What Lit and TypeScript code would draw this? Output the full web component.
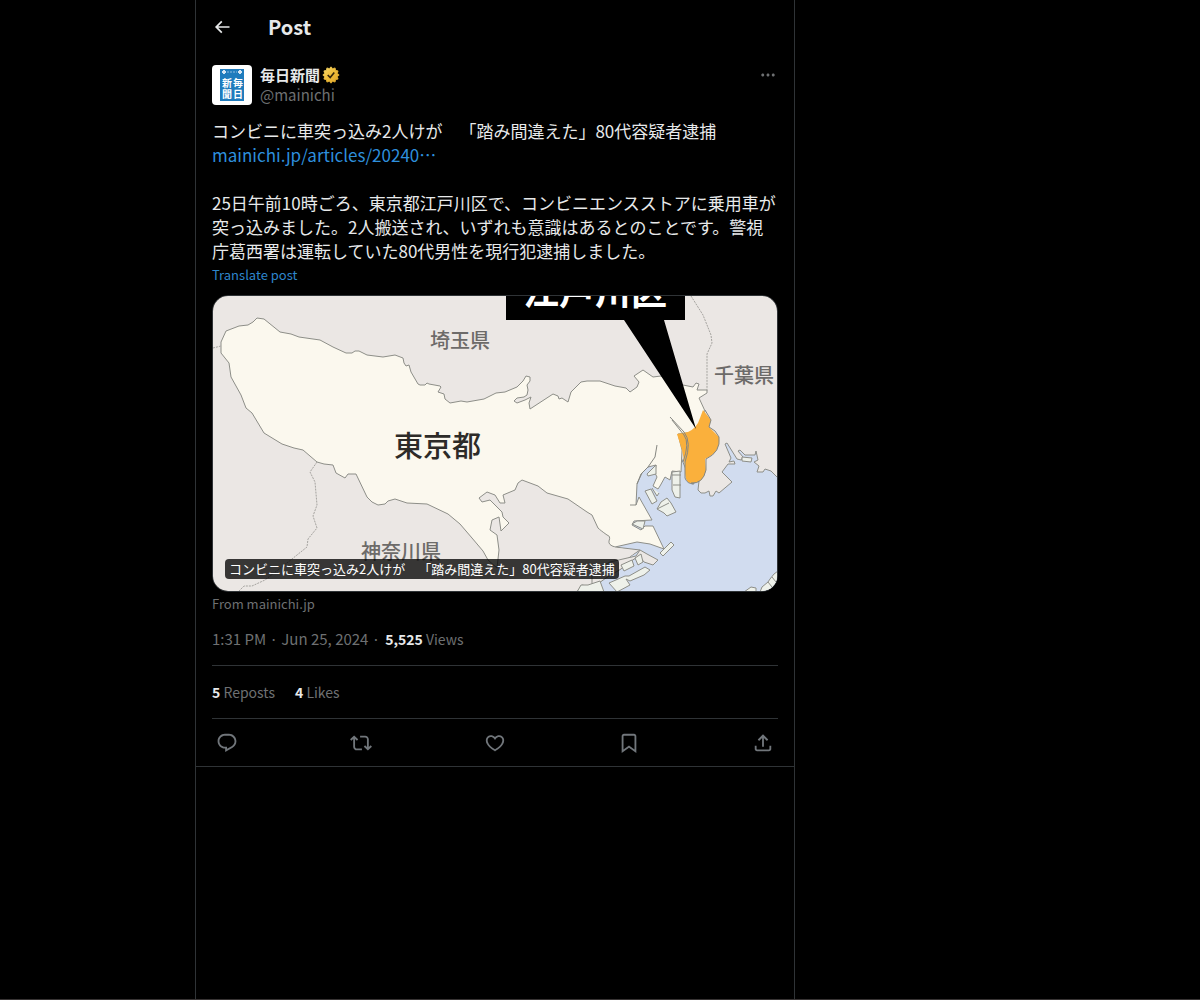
import { LitElement, html, css, svg } from "lit";
import { customElement, property } from "lit/decorators.js";

const ICONS: Record<string, string> = {
  back: "M7.414 13l5.043 5.04-1.414 1.42L3.586 12l7.457-7.46 1.414 1.42L7.414 11H21v2H7.414z",
  more: "M3 12c0-1.1.9-2 2-2s2 .9 2 2-.9 2-2 2-2-.9-2-2zm9 2c1.1 0 2-.9 2-2s-.9-2-2-2-2 .9-2 2 .9 2 2 2zm7 0c1.1 0 2-.9 2-2s-.9-2-2-2-2 .9-2 2 .9 2 2 2z",
  reply:
    "M1.751 10c0-4.42 3.584-8 8.005-8h4.366c4.49 0 8.129 3.64 8.129 8.13 0 2.96-1.607 5.68-4.196 7.11l-8.054 4.46v-3.69h-.067c-4.49.1-8.183-3.51-8.183-8.01zm8.005-6c-3.317 0-6.005 2.69-6.005 6 0 3.37 2.77 6.08 6.138 6.01l.351-.01h1.761v2.3l5.087-2.81c1.951-1.08 3.163-3.13 3.163-5.36 0-3.39-2.744-6.13-6.129-6.13H9.756z",
  repost:
    "M4.5 3.88l4.432 4.14-1.364 1.46L5.5 7.55V16c0 1.1.896 2 2 2H13v2H7.5c-2.209 0-4-1.79-4-4V7.55L1.432 9.48.068 8.02 4.5 3.88zM16.5 6H11V4h5.5c2.209 0 4 1.79 4 4v8.45l2.068-1.93 1.364 1.46-4.432 4.14-4.432-4.14 1.364-1.46 2.068 1.93V8c0-1.1-.896-2-2-2z",
  like: "M16.697 5.5c-1.222-.06-2.679.51-3.89 2.16l-.805 1.09-.806-1.09C9.984 6.01 8.526 5.44 7.304 5.5c-1.243.07-2.349.78-2.91 1.91-.552 1.12-.633 2.78.479 4.82 1.074 1.97 3.257 4.27 7.129 6.61 3.87-2.34 6.052-4.64 7.126-6.61 1.111-2.04 1.03-3.7.477-4.82-.561-1.13-1.666-1.84-2.908-1.91zm4.187 7.69c-1.351 2.48-4.001 5.12-8.379 7.67l-.503.3-.504-.3c-4.379-2.55-7.029-5.19-8.382-7.67-1.36-2.5-1.41-4.86-.514-6.67.887-1.79 2.647-2.91 4.601-3.01 1.651-.09 3.368.56 4.798 2.01 1.429-1.45 3.146-2.1 4.796-2.01 1.954.1 3.714 1.22 4.601 3.01.896 1.81.846 4.17-.514 6.67z",
  bookmark:
    "M4 4.5C4 3.12 5.119 2 6.5 2h11C18.881 2 20 3.12 20 4.5v18.44l-8-5.71-8 5.71V4.5zM6.5 4c-.276 0-.5.22-.5.5v14.56l6-4.29 6 4.29V4.5c0-.28-.224-.5-.5-.5h-11z",
  share:
    "M12 2.59l5.7 5.7-1.41 1.42L13 6.41V16h-2V6.41l-3.3 3.3-1.41-1.42L12 2.59zM21 15l-.02 3.51c0 1.38-1.12 2.49-2.5 2.49H5.5C4.11 21 3 19.88 3 18.5V15h2v3.5c0 .28.22.5.5.5h12.98c.28 0 .5-.22.5-.5L19 15h2z",
};

// Outline of the twelve-pointed verification seal, centred in a 22-unit box.
const SEAL = Array.from({ length: 24 }, (_, i) => {
  const radius = i % 2 ? 8 : 10;
  const angle = (i * Math.PI) / 12;
  return `${(11 + radius * Math.sin(angle)).toFixed(2)},${(11 - radius * Math.cos(angle)).toFixed(2)}`;
}).join(" ");

@customElement("icon-button")
class IconButton extends LitElement {
  @property() icon = "more";
  @property() label = "";

  static styles = css`
    :host {
      display: inline-flex;
    }
    .btn {
      display: inline-flex;
      padding: 0;
      border: 0;
      background: none;
      color: inherit;
      cursor: pointer;
    }
    .glyph {
      width: var(--icon-size, 22px);
      height: var(--icon-size, 22px);
      fill: currentColor;
    }
  `;

  render() {
    return html`<button class="btn" type="button" aria-label=${this.label}>
      <svg class="glyph" viewBox="0 0 24 24" aria-hidden="true"><path d=${ICONS[this.icon]} /></svg>
    </button>`;
  }
}

// Map of Tokyo with Edogawa ward highlighted.
@customElement("ward-map")
class WardMap extends LitElement {
  static styles = css`
    :host {
      display: block;
    }
    .map {
      display: block;
      width: 100%;
      height: auto;
      background: #ebe7e4;
      font-family: "Noto Sans CJK JP", sans-serif;
    }
    .sea {
      fill: #d1dcef;
    }
    .land {
      fill: #fbf8ee;
    }
    .far {
      fill: #ebe7e4;
    }
    .isle {
      fill: #eef1ea;
    }
    .ward {
      fill: #fab03c;
    }
    .coast {
      stroke: #8d8e88;
      stroke-width: 1;
      stroke-linejoin: round;
    }
    .line {
      fill: none;
      stroke: #858680;
      stroke-width: 1;
      stroke-linejoin: round;
    }
    .dotted {
      fill: none;
      stroke: #a5a39f;
      stroke-width: 1;
      stroke-dasharray: 2 1;
    }
    .pref {
      font-size: 20px;
      font-weight: 500;
      fill: #6d6b69;
    }
    .city {
      font-size: 29px;
      font-weight: 500;
      fill: #2d2b28;
    }
    .callout {
      font-size: 36px;
      font-weight: 700;
      fill: #fff;
    }
  `;

  render() {
    return html`<svg class="map" viewBox="213 296 564 295" role="img" aria-label="東京都 江戸川区">
      ${svg`
      <path class="sea coast" d="M680 455L692 484L699 481L698 490L701 493L705 493L709 491L710 496L713 496L716 491L719 493L732 482L722 472L728 464L735 464L734 461L729 462L731 458L725 444L727 443L737 459L741 460L743 457L738 451L740 450L745 455L755 455L756 451L758 460L754 462L759 466L757 472L763 472L765 469L771 471L778 478V592H577L582 585L590 587L600 582L612 572L625 560L640 550L615 547L630 500L636 484L640 474L655 461L657 445L672 460Z"/>
      <path class="land coast" d="M221 342L226 331L239 326L248 325L253 322L257 318L264 319L280 332L291 334L299 337L320 340L333 347L346 353H352L355 351L359 351L367 355L383 357L395 355L403 358L404 363L406 366L409 365L411 372L418 384L420 385L425 385L427 383L429 384L440 386L441 387L438 392L444 394L445 399L450 403L461 401L467 402L484 399L496 393L505 392L517 387L523 381L526 376L530 377V381L527 385L528 390L527 395L524 397L517 398L514 401L517 403L525 400L531 397L529 403L530 409L553 394L558 396L559 399L562 398L568 402L571 392L581 382L587 381L600 381L615 386L626 388L630 392L637 387L639 382L634 376L643 370L653 377L661 376L683 385L693 387L696 383L699 384L697 390L707 390V393L699 398L705 411L696 432L678 434L682 450L681 472L672 471L670 480L665 477L660 486L658 489L653 486L657 477L655 473L656 465L648 467L642 473L637 484L636 505L639 497L652 520L634 521L632 525L641 530L645 526L653 526L664 549L650 544L637 542L615 547Q608 545 609 541Q611 536 607 535Q600 530 598 528L592 515L587 512L568 499L547 493L538 486L522 480L518 483L515 490L503 495L505 503L500 503L495 495L487 492L479 498L482 502L490 500L502 512L503 517L509 523L501 531L499 517L492 520L490 530L497 535L499 550L497 568L488 560L483 551L472 538L460 524L448 514L427 504L407 503L395 499L388 501L385 504L378 505L372 502L367 497L356 474L348 474L345 478L336 473L333 465L324 464L317 462L303 450L294 448L282 444L264 433L252 413L246 408L241 395L231 377L229 363L221 353Z"/>
      <path class="far" d="M611 547L637 551L628 558L600 560Z"/>
      <path class="far coast" d="M592 571L610 562L636 556L640 550L647 554L658 560L653 565L644 562L639 556L628 563L621 569L606 578L592 588Z"/>
      <path class="isle coast" d="M609 583L625 576L629 576L645 567L650 570L644 575L630 581L626 579L630 585L617 592ZM621 565L632 560L634 566L624 571ZM635 558L641 554L643 562L638 565ZM660 553L671 542L674 545L663 556ZM657 509L661 502L667 498L671 503L676 512L667 516L664 513ZM657 509L669 503M645 491L651 489L657 501L652 504ZM652 488L657 496L659 493M672 472L680 471V498L675 497L672 490ZM672 475H681M673 485H681M647 474L656 465L656 474L648 476ZM632 524L637 521H645L643 529ZM630 505H636M742 457L752 458L751 462L742 461Z"/>
      <path class="isle coast" d="M744 592L751 587L756 588L756 592M760 592L762 587L768 582L770 579L774 574L778 571V592M768 582L772 587M772 577L776 582"/>
      <path class="isle coast" d="M577 592L581 585L588 585L600 581L604 592Z"/>
      <path class="ward" d="M703 410L711 420L709 427L719 437Q721 452 705 459L706 470Q703 484 691 483Q684 483 685 465L682 450L677 434L688 432Q697 428 700 418Z"/>
      <path class="line" d="M705 410L711 420L709 427L715 431L719 437Q721 452 706 459V470Q703 484 691 483M670 417L684 432Q692 442 685 462V478Q687 484 694 484M672 420L684 435Q690 443 683 462M657 445L655 457L648 467L641 474L637 484"/>
      <path class="dotted" d="M691 296L703 315L711 335L712 343L707 354V392M213 348L221 346M317 462L310 472L315 482L317 505L313 516L317 528L308 539L307 547L292 559L265 580L252 586H244L238 592"/>
      <path d="M506 296H685V320H664L696 429L624 320H506Z"/>
      <text class="callout" x="523" y="305">江戸川区</text>
      <text class="pref" x="430" y="348">埼玉県</text>
      <text class="pref" x="714" y="383">千葉県</text>
      <text class="pref" x="361" y="559">神奈川県</text>
      <text class="city" x="394" y="457">東京都</text>`}
    </svg>`;
  }
}

@customElement("app-root")
class AppRoot extends LitElement {
  static styles = css`
    :host {
      display: grid;
      grid-template-columns: minmax(0, 195fr) minmax(0, 600px) minmax(0, 405fr);
      box-sizing: border-box;
      min-height: 100vh;
      border-bottom: 1px solid #383434;
      background: #000;
      color: #e7e9ea;
      font-family: "Noto Sans CJK JP", sans-serif;
      font-size: 15px;
      line-height: 20px;
      text-spacing-trim: space-all;
    }
    .column {
      grid-column: 2;
      border: solid #2f3336;
      border-width: 0 1px;
    }
    .bar {
      display: flex;
      align-items: center;
      gap: 36px;
      height: 53px;
      padding: 0 16px;
      --icon-size: 20px;
    }
    .title {
      margin: 0;
      font-size: 20px;
      line-height: 24px;
      font-weight: 700;
    }
    .post {
      padding: 12px 16px 0;
      border-bottom: 1px solid #2f3336;
    }
    .author {
      display: flex;
      gap: 8px;
      --icon-size: 18px;
    }
    .avatar {
      width: 40px;
      height: 40px;
      border-radius: 4px;
      background: #fff;
    }
    .kanji {
      font-size: 10px;
      font-weight: 700;
      fill: #fff;
    }
    .names {
      flex: 1;
      display: flex;
      flex-direction: column;
    }
    .name {
      display: flex;
      align-items: center;
      gap: 2px;
      color: inherit;
      font-weight: 700;
      text-decoration: none;
    }
    .badge {
      width: 18px;
      height: 18px;
    }
    .muted,
    .handle,
    .more {
      color: #6e7072;
      text-decoration: none;
    }
    .more {
      align-self: flex-start;
      padding: 1px;
    }
    .body {
      margin: 14px 0 0;
      font-size: 17px;
      line-height: 24px;
      white-space: pre-wrap;
      overflow-wrap: anywhere;
    }
    .link {
      color: #2e8fdc;
      text-decoration: none;
    }
    .translate {
      display: block;
      padding: 0;
      border: 0;
      background: none;
      color: #2e86cc;
      font: inherit;
      font-size: 13px;
      line-height: 24px;
      cursor: pointer;
    }
    .card {
      position: relative;
      display: block;
      margin-top: 8px;
      overflow: hidden;
      border: 1px solid #2f3336;
      border-radius: 16px;
    }
    .caption {
      position: absolute;
      left: 12px;
      bottom: 12px;
      padding: 0 4px;
      border-radius: 4px;
      background: rgba(0, 0, 0, 0.77);
      color: #fff;
      font-size: 13px;
      line-height: 20px;
    }
    .source {
      display: block;
      font-size: 13px;
      line-height: 24px;
    }
    .meta {
      display: flex;
      align-items: baseline;
      gap: 5px;
      padding: 13px 0 16px;
      border-bottom: 1px solid #2f3336;
    }
    .count {
      font-size: 14px;
    }
    .strong {
      color: #e7e9ea;
      font-weight: 700;
    }
    .stats {
      display: flex;
      gap: 20px;
      padding: 16px 0;
      border-bottom: 1px solid #2f3336;
    }
    .actions {
      display: flex;
      justify-content: space-between;
      align-items: center;
      height: 47px;
      padding: 0 4px;
      color: #71767b;
    }
  `;

  private actions = [
    ["reply", "Reply"],
    ["repost", "Repost"],
    ["like", "Like"],
    ["bookmark", "Bookmark"],
    ["share", "Share"],
  ];

  render() {
    return html`<main class="column">
      <header class="bar">
        <icon-button icon="back" label="Back"></icon-button>
        <h1 class="title">Post</h1>
      </header>
      <article class="post">
        <div class="author">
          <svg class="avatar" viewBox="0 0 40 40" aria-hidden="true">
            <rect x="8" y="4" width="24" height="32" fill="#1f7cbd" />
            <path d="M11 5h2v4h-2zM27 5h2v4h-2zM10 6h4v2h-4zM26 6h4v2h-4z" fill="#d5e6f4" />
            <path d="M15 7h10" stroke="#8fbce0" stroke-dasharray="2 1" />
            <text class="kanji" x="10" y="22">新</text>
            <text class="kanji" x="21" y="22">毎</text>
            <text class="kanji" x="10" y="33">聞</text>
            <text class="kanji" x="21" y="33">日</text>
          </svg>
          <div class="names">
            <a class="name" href="#mainichi"
              >毎日新聞
              <svg class="badge" viewBox="0 0 22 22" aria-hidden="true">
                <defs>
                  <linearGradient id="gold" x1="0" y1="0" x2="1" y2="1">
                    <stop offset="0" stop-color="#f7dc70" />
                    <stop offset=".5" stop-color="#edbb38" />
                    <stop offset="1" stop-color="#e0a52a" />
                  </linearGradient>
                </defs>
                <polygon
                  points=${SEAL}
                  fill="url(#gold)"
                  stroke="url(#gold)"
                  stroke-linejoin="round"
                />
                <path
                  fill="none"
                  stroke="#33250c"
                  stroke-width="2"
                  d="M7 11l3 3 5-6"
                />
              </svg>
            </a>
            <a class="handle" href="#mainichi">@mainichi</a>
          </div>
          <icon-button class="more" icon="more" label="More"></icon-button>
        </div>
        <p class="body" lang="ja">コンビニに車突っ込み2人けが　「踏み間違えた」80代容疑者逮捕 <a class="link" href="#article">mainichi.jp/articles/20240…</a>

25日午前10時ごろ、東京都江戸川区で、コンビニエンスストアに乗用車が突っ込みました。2人搬送され、いずれも意識はあるとのことです。警視庁葛西署は運転していた80代男性を現行犯逮捕しました。</p>
        <button class="translate" type="button">Translate post</button>
        <a class="card" href="#article">
          <ward-map></ward-map>
          <span class="caption" lang="ja">コンビニに車突っ込み2人けが　「踏み間違えた」80代容疑者逮捕</span>
        </a>
        <a class="source muted" href="#article">From mainichi.jp</a>
        <div class="meta muted">
          <span>1:31 PM · Jun 25, 2024 ·</span>
          <span class="count"><span class="strong">5,525</span> Views</span>
        </div>
        <div class="stats">
          <a class="count muted" href="#reposts"><span class="strong">5</span> Reposts</a>
          <a class="count muted" href="#likes"><span class="strong">4</span> Likes</a>
        </div>
        <div class="actions">
          ${this.actions.map(([icon, label]) => html`<icon-button icon=${icon} label=${label}></icon-button>`)}
        </div>
      </article>
    </main>`;
  }
}
